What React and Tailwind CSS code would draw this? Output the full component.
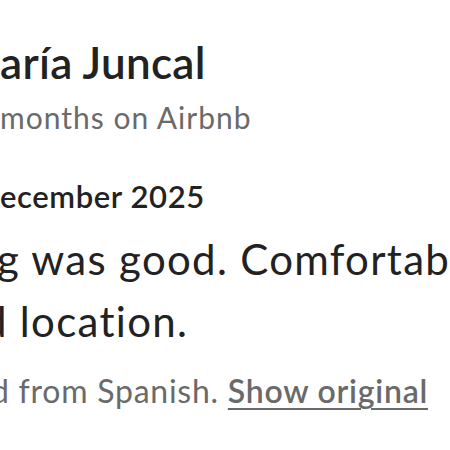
export default function App() {
  return (
    <div
      className="w-[450px] h-[450px] overflow-hidden bg-white text-[#222222] [font-variant-ligatures:none]"
      style={{ fontFamily: "Lato, 'Noto Sans', sans-serif" }}
    >
      <div className="pt-[36px] flex flex-col">
        <div className="whitespace-nowrap text-[44px] leading-[52px] font-semibold tracking-[0.3px]">
          aría Juncal
        </div>
        <div className="mt-[9px] whitespace-nowrap text-[30px] leading-[40px] text-[#6a6a6a] tracking-[1px]">
          months on Airbnb
        </div>
        <div className="mt-[39px] whitespace-nowrap text-[31px] leading-[40px] font-semibold tracking-[0.6px]">
          ecember 2025
        </div>
        <div className="mt-[12px] whitespace-nowrap text-[42px] leading-[62px] tracking-[1.3px]">
          <div className="-ml-[3px]">g was good. Comfortable and</div>
          <div className="-ml-[17px]">d location.</div>
        </div>
        <div className="mt-[17px] whitespace-nowrap text-[32px] leading-[44px] text-[#6a6a6a] tracking-[0.75px] -ml-[9px]">
          d from Spanish.{" "}
          <span className="font-semibold underline underline-offset-[5px] decoration-[2px]">
            Show original
          </span>
        </div>
      </div>
    </div>
  );
}
